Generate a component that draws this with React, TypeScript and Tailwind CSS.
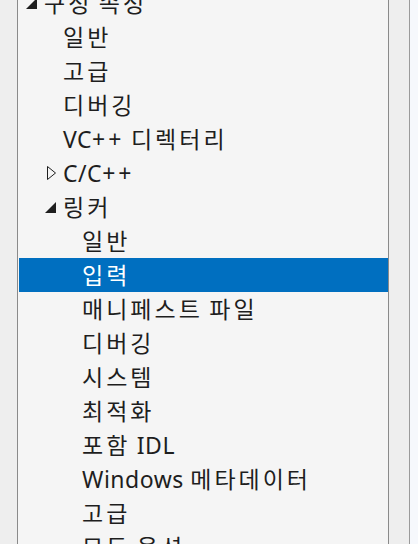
import React from 'react'

type Node = { label: string; level: number; arrow?: 'open' | 'closed'; selected?: boolean }

const rows: Node[] = [
  { label: '구성 속성', level: 0, arrow: 'open' },
  { label: '일반', level: 1 },
  { label: '고급', level: 1 },
  { label: '디버깅', level: 1 },
  { label: 'VC++ 디렉터리', level: 1 },
  { label: 'C/C++', level: 1, arrow: 'closed' },
  { label: '링커', level: 1, arrow: 'open' },
  { label: '일반', level: 2 },
  { label: '입력', level: 2, selected: true },
  { label: '매니페스트 파일', level: 2 },
  { label: '디버깅', level: 2 },
  { label: '시스템', level: 2 },
  { label: '최적화', level: 2 },
  { label: '포함 IDL', level: 2 },
  { label: 'Windows 메타데이터', level: 2 },
  { label: '고급', level: 2 },
  { label: '모든 옵션', level: 2 },
]

const indent = ['pl-[7px]', 'pl-[26px]', 'pl-[45px]']

function Arrow({ kind }: { kind?: 'open' | 'closed' }) {
  if (kind === 'open')
    return (
      <svg width="11" height="11" viewBox="0 0 11 11">
        <polygon points="11,0 11,11 0,11" fill="#1e1e1e" />
      </svg>
    )
  if (kind === 'closed')
    return (
      <svg width="9" height="14" viewBox="0 0 9 14">
        <polygon points="0.5,0.5 8.5,7 0.5,13.5" fill="none" stroke="#1e1e1e" strokeWidth="1" />
      </svg>
    )
  return null
}

// hangul runs and plus signs get wider spacing, like the Malgun Gothic / Segoe UI original
function Label({ text }: { text: string }) {
  const parts = text.split(/([가-힣]+|\++)/).filter(Boolean)
  return (
    <span className="whitespace-nowrap text-[23px] leading-none">
      {parts.map((p, i) =>
        /[가-힣+]/.test(p) ? (
          <span key={i} className="tracking-[3px]">{p}</span>
        ) : (
          <span key={i} className="tracking-[0.5px]">{p}</span>
        )
      )}
    </span>
  )
}

export default function App() {
  return (
    <div
      className="flex h-[544px] w-[418px] overflow-hidden bg-[#f5f5f5]"
      style={{ fontFamily: '"Noto Sans", "Noto Sans CJK KR", sans-serif' }}
    >
      <div className="w-[17px] shrink-0 bg-[#eeeeee]" />
      <div className="w-px shrink-0 bg-[#8a8a8a]" />
      {/* tree */}
      <div className="flex w-[370px] shrink-0 flex-col bg-[#f5f5f5] pl-px">
        <div className="-mt-[14px] flex flex-col">
          {rows.map((r, i) => (
            <div
              key={i}
              className={`flex h-[34px] shrink-0 items-center ${indent[r.level]} ${
                r.selected ? 'bg-[#006fc0] text-white' : 'text-[#1e1e1e]'
              }`}
            >
              <div className="flex w-[18px] shrink-0 justify-end pr-[7px]">
                <Arrow kind={r.arrow} />
              </div>
              <Label text={r.label} />
            </div>
          ))}
        </div>
      </div>
      <div className="w-px shrink-0 bg-[#8a8a8a]" />
      <div className="w-[20px] shrink-0 bg-[#eeeeee]" />
      <div className="w-px shrink-0 bg-[#9a9a9a]" />
      <div className="flex-1 bg-[#f6f8fc]" />
    </div>
  )
}
